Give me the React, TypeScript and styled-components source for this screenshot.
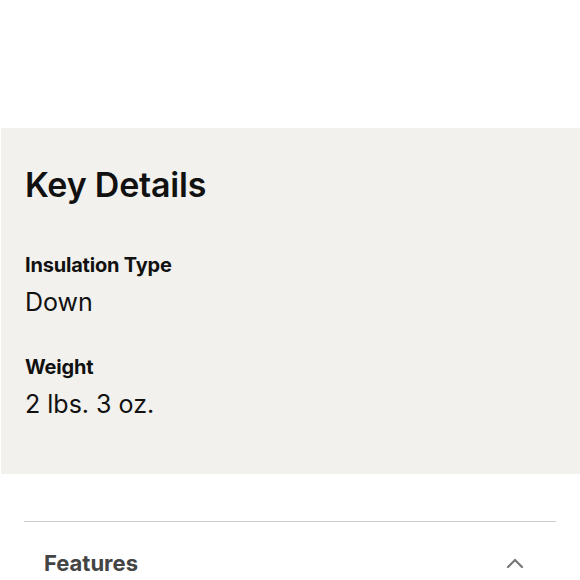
import React from "react";
import styled, { createGlobalStyle } from "styled-components";

const GlobalStyle = createGlobalStyle`
  body {
    margin: 0;
    background: #fff;
    font-family: Inter, "Liberation Sans", sans-serif;
    color: #111;
  }
`;

const Page = styled.div`
  width: 580px;
  padding-top: 128px;
`;

const Panel = styled.section`
  background-color: #f2f1ed;
  margin-left: 1px;
  padding: 37px 24px 55px;
`;

const Title = styled.h2`
  margin: 0 0 48px;
  font-size: 34px;
  line-height: 40px;
  font-weight: 600;
  letter-spacing: -0.2px;
`;

const Detail = styled.div`
  & + & {
    margin-top: 38px;
  }
`;

const Label = styled.div`
  font-size: 20px;
  line-height: 24px;
  font-weight: 700;
  letter-spacing: -0.2px;
`;

const Value = styled.div`
  margin-top: 10px;
  font-size: 25px;
  line-height: 30px;
  font-weight: 400;
`;

const Accordion = styled.div`
  margin: 47px 24px 0;
  border-top: 1px solid #cfcdca;
`;

const AccordionHeader = styled.div`
  display: flex;
  align-items: center;
  justify-content: space-between;
  padding: 28px 32px 0 20px;
`;

const AccordionTitle = styled.span`
  font-size: 22px;
  line-height: 26px;
  font-weight: 700;
  color: #444;
`;

const Chevron = () => (
  <svg width="18" height="12" viewBox="0 0 18 12" fill="none">
    <path d="M2 10 L9 3 L16 10" stroke="#777" strokeWidth="2.2" strokeLinecap="round" />
  </svg>
);

const details = [
  { label: "Insulation Type", value: "Down" },
  { label: "Weight", value: "2 lbs. 3 oz." },
];

export default function App() {
  return (
    <Page>
      <GlobalStyle />
      <Panel>
        <Title>Key Details</Title>
        {details.map((d) => (
          <Detail key={d.label}>
            <Label>{d.label}</Label>
            <Value>{d.value}</Value>
          </Detail>
        ))}
      </Panel>
      <Accordion>
        <AccordionHeader>
          <AccordionTitle>Features</AccordionTitle>
          <Chevron />
        </AccordionHeader>
      </Accordion>
    </Page>
  );
}
